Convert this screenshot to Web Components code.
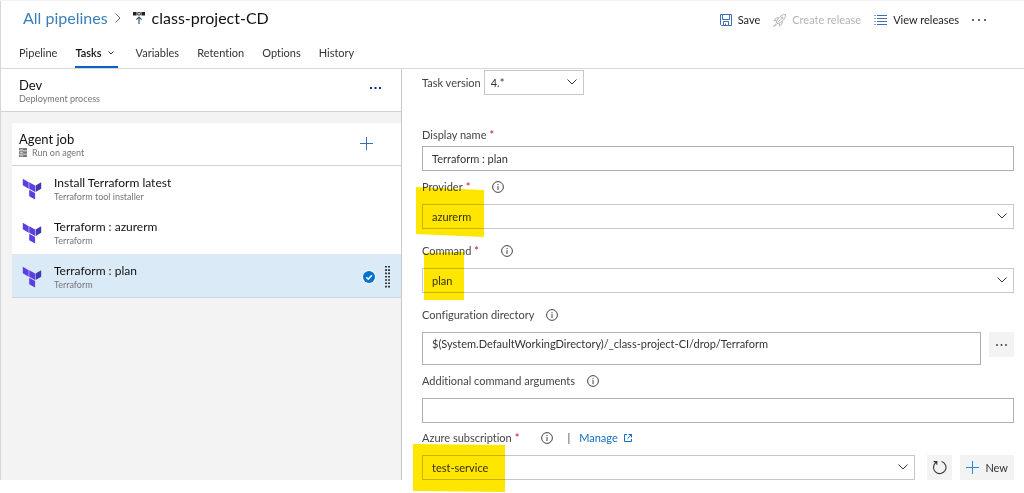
<!DOCTYPE html>
<html lang="en">
<head>
<meta charset="utf-8">
<title>class-project-CD - Pipelines</title>
<style>
  body { margin: 0; min-height: 100vh; background: #fff; color: #333; font: 11px/16px Lato, "Open Sans", sans-serif; font-variant-ligatures: none; }
</style>
</head>
<body>
<pipeline-editor>
  <editor-header slot="header"></editor-header>
  <process-panel slot="process">
    <task-item name="Install Terraform latest" kind="Terraform tool installer"></task-item>
    <task-item name="Terraform : azurerm" kind="Terraform"></task-item>
    <task-item name="Terraform : plan" kind="Terraform" selected></task-item>
  </process-panel>
  <task-form slot="form"></task-form>
</pipeline-editor>

<script>
const base = `
  *, *::before { box-sizing: border-box; }
  button, input, select, textarea { font: inherit; font-variant-ligatures: none; color: inherit; margin: 0; border-radius: 0; }
  button { border: 0; background: none; padding: 0; display: flex; align-items: center; }
  a { text-decoration: none; }
  svg { display: block; flex: none; }
`;

function define(name, render) {
  customElements.define(name, class extends HTMLElement {
    constructor() {
      super();
      this.attachShadow({ mode: "open" });
    }
    connectedCallback() {
      const t = document.createElement("template");
      t.innerHTML = `<style>${base}</style>` + render(this);
      this.shadowRoot.replaceChildren(t.content.cloneNode(true));
    }
  });
}

const icons = {
  chevronRight: `<svg width="6" height="12" viewBox="0 0 6 12" fill="none" stroke="#666"><path d="M.5 1.5 5 6 .5 10.5"/></svg>`,
  chevronSmall: `<svg width="6" height="4" viewBox="0 0 6 4" fill="none" stroke="#333"><path d="M.5 .5 3 3 5.5 .5"/></svg>`,
  chevron: `<svg width="10" height="6" viewBox="0 0 10 6" fill="none" stroke="#333"><path d="M.5 .5 5 5 9.5 .5"/></svg>`,
  release: `<svg width="12" height="12" viewBox="0 0 12 12"><path fill="#222" d="M0 0h3.6v3.5H0zM8.4 0H12v3.5H8.4z"/><path fill="none" stroke="#222" stroke-width=".9" d="M4.7 .6h2.600v2.400H4.7z"/><path fill="none" stroke="#3e5a72" stroke-width="1.2" d="M6 12V5.2M3.4 7.6 6 5l2.600 2.600"/></svg>`,
  save: `<svg width="12" height="12" viewBox="0 0 12 12" fill="none" stroke="#3f6db8"><path d="M.5 .5h11v11h-10l-1-1z"/><path d="M2.5 .5v5h7v-5M3.5 11.5v-4h5v4M5.5 9.5v2"/></svg>`,
  rocket: `<svg width="13" height="13" viewBox="0 0 13 13" fill="none" stroke="#b4b4b4"><path d="M12.5 .5c-3 0-5 1.2-6.8 3.4L3 8l2 2 4.1-2.7C11.3 5.5 12.5 3.5 12.5 .5zM5.7 3.900H3.2L1 6.5l2.7 .3M9.1 7.3v2.5L6.5 12l-.3-2.7M3 9.5 .5 12.5 3.8 10.5M4.5 8.5l3-3"/><circle cx="9" cy="4" r="1"/></svg>`,
  list: `<svg width="13" height="10" viewBox="0 0 13 10" stroke="#3f6db8"><path d="M3 .5h10M3 3.5h10M3 6.5h10M3 9.5h10"/><path stroke="#8aa7d6" d="M0 .5h2M0 3.5h2M0 6.5h2M0 9.5h2"/></svg>`,
  more: c => `<svg width="14" height="2" viewBox="0 0 14 2" fill="${c}"><circle cx="1" cy="1" r="1"/><circle cx="7" cy="1" r="1"/><circle cx="13" cy="1" r="1"/></svg>`,
  moreSmall: c => `<svg width="11" height="2" viewBox="0 0 11 2" fill="${c}"><circle cx="1" cy="1" r=".9"/><circle cx="5.5" cy="1" r=".9"/><circle cx="10" cy="1" r=".9"/></svg>`,
  moreBold: c => `<svg width="11" height="2" viewBox="0 0 11 2" fill="${c}"><path d="M0 0h2v2H0zM4.5 0h2v2h-2zM9 0h2v2H9z"/></svg>`,
  plus: c => `<svg width="13" height="13" viewBox="0 0 13 13" stroke="${c}"><path d="M6.5 0v13M0 6.5h13"/></svg>`,
  server: `<svg width="8" height="9" viewBox="0 0 8 9"><path fill="#777" d="M0 0h8v2.5H0zM0 3.200h8v2.5H0zM0 6.5h8V9H0z"/><path stroke="#ccc" d="M1 1.3h3M1 4.5h3M1 7.8h3"/></svg>`,
  terraform: `<svg width="20" height="22" viewBox="0 0 20 22"><path fill="#5c3fe0" d="M.8 .8 6.7 4.2v6.5L.8 7.3zM7.2 4.2l5.900 3.4v6.5l-5.900-3.4zM7.2 11.7l5.900 3.3v6.5l-5.900-3.3z"/><path fill="#4038b0" d="M13.600 7.6 19.2 4.2v6.5l-5.600 3.4z"/></svg>`,
  check: `<svg width="14" height="14" viewBox="0 0 14 14"><circle cx="7" cy="7" r="7" fill="#f5faff"/><circle cx="7" cy="7" r="6" fill="#0072d0"/><path fill="none" stroke="#fff" stroke-width="1.500" d="m4.3 7.2 2 1.900 3.600-3.8"/></svg>`,
  grip: `<svg width="5" height="22" viewBox="0 0 5 22" stroke="#222" stroke-width="1.800"><path d="M1 0v22M4 0v22" stroke-dasharray="1.600 1.700"/></svg>`,
  info: `<svg width="12" height="12" viewBox="0 0 12 12" fill="none" stroke="#444"><circle cx="6" cy="6" r="5.400"/><path d="M6 5v4M6 3v1.100"/></svg>`,
  external: `<svg width="8" height="8" viewBox="0 0 8 8" fill="none" stroke="#106ebe"><path d="M3 .5H.5v7h7V5M4.5 .5h3v3M7.5 .5l-4 4"/></svg>`,
  refresh: `<svg width="15" height="15" viewBox="0 0 14 14" fill="none" stroke="#333"><path d="M9 1.4A5.8 5.8 0 1 1 4 2.100M1.5 1.5h3v3"/></svg>`
};

define("pipeline-editor", () => `
  <style>
    :host { display: block; border-top: 1px solid #f3f3f3; padding-bottom: 12px; }
    .head, .body { border-left: 1px solid #d6d6d6; }
    .body { display: grid; grid-template-columns: 401px minmax(0, 1fr); }
    .side { display: grid; }
  </style>
  <div class="head"><slot name="header"></slot></div>
  <main class="body">
    <div class="side"><slot name="process"></slot></div>
    <slot name="form"></slot>
  </main>
`);

define("editor-header", () => `
  <style>
    :host { display: block; border-bottom: 1px solid #d9d9d9; }
    .top { display: flex; justify-content: space-between; padding: 4px 38px 0 22px; height: 36px; }
    .crumbs, .actions { display: flex; align-items: center; }
    .crumbs { gap: 7px; height: 26px; font-size: 16px; line-height: 24px; }
    .crumbs a { color: #3b7fb9; }
    h1 { margin: 0; font: inherit; color: #111; }
    .crumbs svg:nth-of-type(2) { margin-left: 5px; }
    .actions { gap: 13px; height: 30px; color: #222; }
    .actions button { gap: 6px; }
    .actions button:disabled { color: #b4b4b4; }
    nav { display: flex; gap: 18px; padding: 0 18px; }
    nav a { color: #333; padding: 8px 0 5px; height: 31px; border-bottom: 2px solid transparent; display: flex; align-items: center; gap: 6px; }
    nav a.on { color: #111; font-weight: 600; border-color: #0b61c4; padding-right: 4px; }
  </style>
  <div class="top">
    <div class="crumbs"><a href="#pipelines">All pipelines</a>${icons.chevronRight}${icons.release}<h1>class-project-CD</h1></div>
    <div class="actions">
      <button>${icons.save}Save</button>
      <button disabled>${icons.rocket}Create release</button>
      <button>${icons.list}View releases</button>
      <button aria-label="More actions">${icons.more("#333")}</button>
    </div>
  </div>
  <nav>
    <a href="#pipeline">Pipeline</a>
    <a href="#tasks" class="on">Tasks ${icons.chevronSmall}</a>
    <a href="#variables">Variables</a>
    <a href="#retention">Retention</a>
    <a href="#options">Options</a>
    <a href="#history">History</a>
  </nav>
`);

define("process-panel", () => `
  <style>
    :host { display: block; background: #f3f3f3; border-right: 1px solid #c8c8c8; }
    .row { display: flex; align-items: center; justify-content: space-between; background: #fff; }
    .stage { height: 43px; padding: 2px 20px 0 18px; border-bottom: 1px solid #d2d2d2; }
    .stage button { height: 8px; align-items: start; }
    .job { height: 43px; padding: 1px 28px 0 7px; border-bottom: 1px solid #d2d2d2; }
    .job button { height: 15px; align-items: start; }
    .card { margin: 12px 0 0 11px; background: #fff; }
    h2 { margin: 0; font-size: 13px; line-height: 16px; font-weight: 400; color: #111; }
    p { margin: 0; font-size: 9px; line-height: 12px; color: #767676; display: flex; align-items: center; gap: 5px; }
    :host { display: flow-root; }
    .card { margin-top: 11px; }
  </style>
  <div class="row stage">
    <div><h2>Dev</h2><p>Deployment process</p></div>
    <button aria-label="Stage actions">${icons.moreBold("#0b2f94")}</button>
  </div>
  <div class="card">
    <div class="row job">
      <div><h2>Agent job</h2><p>${icons.server}Run on agent</p></div>
      <button aria-label="Add a task">${icons.plus("#3f6db8")}</button>
    </div>
    <slot></slot>
  </div>
`);

define("task-item", el => `
  <style>
    :host { display: flex; box-sizing: border-box; align-items: center; height: 44px; padding: 2px 11px 0 10px; background: #fff; }
    :host([selected]) { background: #dbeaf7; border-bottom: 1px solid #ccd6dc; }
    .text { flex: 1; margin-left: 12px; }
    h3 { margin: 0; font-size: 12px; line-height: 16px; font-weight: 400; color: #111; }
    p { margin: 0; font-size: 9px; line-height: 12px; color: #767676; }
    .state { display: flex; align-items: center; gap: 9px; }
  </style>
  ${icons.terraform}
  <div class="text"><h3>${el.getAttribute("name")}</h3><p>${el.getAttribute("kind")}</p></div>
  ${el.hasAttribute("selected") ? `<div class="state">${icons.check}${icons.grip}</div>` : ""}
`);

/* A labelled control; kind is text, area or select. */
define("form-field", el => {
  const a = n => el.getAttribute(n) || "";
  const kind = a("kind") || "text";
  const control = {
    text: `<input id="c" type="text" value="${a("value")}">`,
    area: `<textarea id="c">${a("value")}</textarea>`,
    select: `<div class="pick"><select id="c"><option>${a("value")}</option></select>${icons.chevron}</div>`
  }[kind];
  return `
  <style>
    :host { display: block; }
    .label { display: flex; align-items: center; height: 16px; margin-bottom: 9px; color: #444; }
    :host([tight]) .label { margin-bottom: 3px; }
    .req { color: #c50f1f; margin-left: 3px; }
    .info { margin-left: 12px; }
    .req + .info { margin-left: 22px; }
    .line { display: flex; align-items: flex-start; }
    .box { flex: 1; min-width: 0; position: relative; }
    input, select, textarea { display: block; width: 100%; height: 25px; padding: 0 9px; border: 1px solid #b0b0b0; background: #fff; outline: 0; }
    textarea { height: 33px; padding: 3px 9px; resize: none; overflow: hidden; }
    select { appearance: none; border-color: #c8c8c8; }
    .pick { position: relative; }
    .pick svg { position: absolute; right: 7px; top: 9px; pointer-events: none; }
    :host([inline]) { display: flex; align-items: center; gap: 3px; }
    :host([inline]) .label { margin: 0; }
    :host([inline]) .line { width: 100px; }
    :host([inline]) select { padding: 0 6px; }
    ::slotted(marker-stroke) { position: absolute; }
  </style>
  <div class="label"><label for="c">${a("label")}</label>${el.hasAttribute("required") ? `<span class="req">*</span>` : ""}${el.hasAttribute("info") ? `<span class="info">${icons.info}</span>` : ""}<slot name="extra"></slot></div>
  <div class="line"><div class="box">${control}<slot name="marker"></slot></div><slot name="side"></slot></div>`;
});

/* A highlighter stroke laid over a field's value. */
define("marker-stroke", el => `
  <style>
    :host { display: block; mix-blend-mode: multiply; pointer-events: none; }
  </style>
  <svg width="${el.getAttribute("w")}" height="${el.getAttribute("h")}"><polygon fill="#ffe600" points="${el.getAttribute("points")}"/></svg>
`);

define("tool-button", el => `
  <style>
    :host { display: block; }
    button { min-width: 25px; height: 25px; padding: 0 5px; gap: 6px; justify-content: center; background: #f3f3f3; }
    :host([icon="plus"]) button { padding: 0 6px; }
  </style>
  <button aria-label="${el.getAttribute("label")}">${{ more: icons.moreSmall("#333"), refresh: icons.refresh, plus: icons.plus("#2b88d8") }[el.getAttribute("icon")]}<slot></slot></button>
`);

define("task-form", () => `
  <style>
    :host { display: flex; flex-direction: column; padding: 1px 10px 0 20px; }
    .gap { margin-top: 32px; }
    .near { margin-top: 8px; }
    .far { margin-top: 14px; }
    .even { margin-top: 7px; }
    .manage { display: flex; align-items: center; gap: 9px; margin-left: 14px; }
    .manage a { display: flex; align-items: center; gap: 6px; color: #106ebe; }
    .side { display: flex; gap: 8px; margin-left: 8px; }
    .side.wide { margin-left: 12px; }
    .m1 { left: -7px; top: -17px; }
    .m2 { left: 1px; top: -16px; }
    .m3 { left: -10px; top: -12px; }
  </style>
  <form-field inline kind="select" label="Task version" value="4.*"></form-field>
  <form-field class="gap" tight label="Display name" value="Terraform : plan" required></form-field>
  <form-field class="near" kind="select" label="Provider" value="azurerm" required info>
    <marker-stroke slot="marker" class="m1" w="70" h="52" points="1,0 69,3 69,50 1,47"></marker-stroke>
  </form-field>
  <form-field class="far" kind="select" label="Command" value="plan" required info>
    <marker-stroke slot="marker" class="m2" w="42" h="50" points="1,1 41,0 41,48 1,48"></marker-stroke>
  </form-field>
  <form-field class="far" kind="area" label="Configuration directory" value="$(System.DefaultWorkingDirectory)/_class-project-CI/drop/Terraform" info>
    <div slot="side" class="side"><tool-button icon="more" label="Browse"></tool-button></div>
  </form-field>
  <form-field class="near" label="Additional command arguments" info></form-field>
  <form-field class="even" kind="select" label="Azure subscription" value="test-service" required info>
    <span slot="extra" class="manage"><span>|</span><a href="#manage">Manage ${icons.external}</a></span>
    <marker-stroke slot="marker" class="m3" w="94" h="50" points="1,1 93,2 93,49 1,48"></marker-stroke>
    <div slot="side" class="side wide"><tool-button icon="refresh" label="Refresh"></tool-button><tool-button icon="plus" label="New">New</tool-button></div>
  </form-field>
`);
</script>
</body>
</html>
